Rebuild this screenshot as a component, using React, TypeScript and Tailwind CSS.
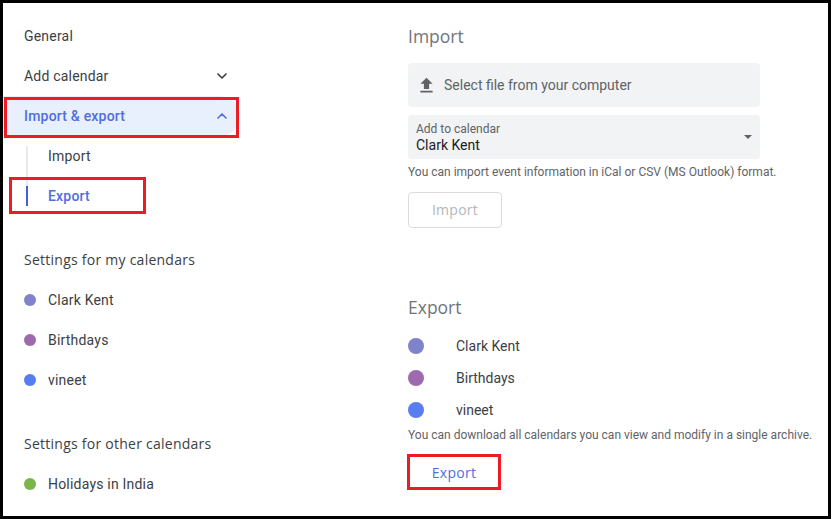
import { ChevronDown, ChevronUp } from 'lucide-react';

const myCalendars = [
  { name: 'Clark Kent', color: 'bg-[#7f83c9]' },
  { name: 'Birthdays', color: 'bg-[#9e69af]' },
  { name: 'vineet', color: 'bg-[#587df0]' },
];

function CalendarRow({ name, color }: { name: string; color: string }) {
  return (
    <div className="flex h-10 items-center pl-[21px]">
      <span className={`h-3 w-3 rounded-full ${color}`} />
      <span className="ml-3 text-sm tracking-[0.2px] text-[#3c4043]">{name}</span>
    </div>
  );
}

function Sidebar() {
  return (
    <div className="w-[235px] shrink-0 pt-[13px] tracking-[0.2px]">
      <div className="flex h-10 items-center pl-[21px] text-sm text-[#3c4043]">General</div>
      <div className="flex h-10 items-center justify-between pl-[21px] pr-[8px] text-sm text-[#3c4043]">
        Add calendar
        <ChevronDown className="h-4 w-4" strokeWidth={2.5} />
      </div>
      <div className="flex h-10 w-[237px] items-center justify-between rounded-r-[20px] bg-[#e8f0fe] pl-[21px] pr-[10px] text-sm font-medium text-[#4f6ee0]">
        Import &amp; export
        <ChevronUp className="h-4 w-4" strokeWidth={2.5} />
      </div>
      <div className="relative flex h-10 items-center pl-[45px] text-sm text-[#3c4043]">
        <span className="absolute bottom-0 left-[23px] top-[10px] w-[2px] bg-[#e8eaed]" />
        Import
      </div>
      <div className="relative flex h-10 items-center pl-[45px] text-sm font-medium text-[#4f6ee0]">
        <span className="absolute left-[23px] top-0 h-[10px] w-[2px] bg-[#e8eaed]" />
        <span className="absolute left-[23px] top-[10px] h-5 w-[2px] bg-[#3f5fdc]" />
        Export
      </div>
      <div className="mt-[24px] flex h-10 items-center pl-[21px] font-['Open_Sans',sans-serif] text-sm font-medium tracking-[0.25px] text-[#3c4043]">
        Settings for my calendars
      </div>
      {myCalendars.map(c => (
        <CalendarRow key={c.name} name={c.name} color={c.color} />
      ))}
      <div className="mt-[24px] flex h-10 items-center pl-[21px] font-['Open_Sans',sans-serif] text-sm font-medium tracking-[0.25px] text-[#3c4043]">
        Settings for other calendars
      </div>
      <CalendarRow name="Holidays in India" color="bg-[#79b54a]" />
    </div>
  );
}

function ImportExport() {
  return (
    <div className="ml-[170px] w-[410px] pt-[21px]">
      <h2 className="font-['Open_Sans',sans-serif] text-[17.5px] leading-6 text-[#70757a]">Import</h2>
      <div className="mt-[15px] flex h-11 w-[352px] items-center rounded bg-[#f1f3f4] pl-2 text-sm text-[#5f6368]">
        <svg viewBox="0 0 24 24" className="h-[21px] w-[21px] fill-[#5f6368]">
          <path d="M5 20h14v-2H5v2zm0-10h4v6h6v-6h4l-7-7-7 7z" />
        </svg>
        <span className="ml-[7px]">Select file from your computer</span>
      </div>
      <div className="relative mt-2 flex h-11 w-[352px] flex-col justify-center rounded bg-[#f1f3f4] pl-2 pt-[2px]">
        <span className="text-xs leading-[15px] text-[#5f6368]">Add to calendar</span>
        <span className="text-sm leading-[17px] text-[#202124]">Clark Kent</span>
        <span className="absolute right-2 top-[20px] h-0 w-0 border-x-[4px] border-t-[4px] border-x-transparent border-t-[#5f6368]" />
      </div>
      <p className="mt-1 text-xs leading-[18px] text-[#5f6368]">
        You can import event information in iCal or CSV (MS Outlook) format.
      </p>
      <button className="mt-[11px] block h-9 w-[94px] rounded border border-[#dadce0] font-['Open_Sans',sans-serif] text-sm font-medium tracking-[0.25px] text-[#b4b6b8]">
        Import
      </button>
      <h2 className="mt-[67px] font-['Open_Sans',sans-serif] text-[17.5px] leading-6 text-[#70757a]">Export</h2>
      <div className="mt-[11px]">
        {myCalendars.map(c => (
          <div key={c.name} className="flex h-8 items-center">
            <span className={`h-4 w-4 rounded-full ${c.color}`} />
            <span className="ml-8 text-sm text-[#3c4043]">{c.name}</span>
          </div>
        ))}
      </div>
      <p className="text-xs leading-[18px] text-[#5f6368]">
        You can download all calendars you can view and modify in a single archive.
      </p>
      <button className="mt-[11px] block h-9 w-[92px] font-['Open_Sans',sans-serif] text-sm font-medium tracking-[0.25px] text-[#4f6ee0]">
        Export
      </button>
    </div>
  );
}

export default function App() {
  return (
    <div className="relative flex h-[519px] w-[831px] overflow-hidden border-[3px] border-black bg-white font-['Roboto',sans-serif]">
      <Sidebar />
      <ImportExport />
      {/* red annotation boxes */}
      <div className="absolute left-[1px] top-[94px] h-[41px] w-[235px] border-[3px] border-[#ed1c24]" />
      <div className="absolute left-[6px] top-[174px] h-[37px] w-[137px] border-[3px] border-[#ed1c24]" />
      <div className="absolute left-[404px] top-[451px] h-[36px] w-[94px] border-[3px] border-[#ed1c24]" />
    </div>
  );
}
